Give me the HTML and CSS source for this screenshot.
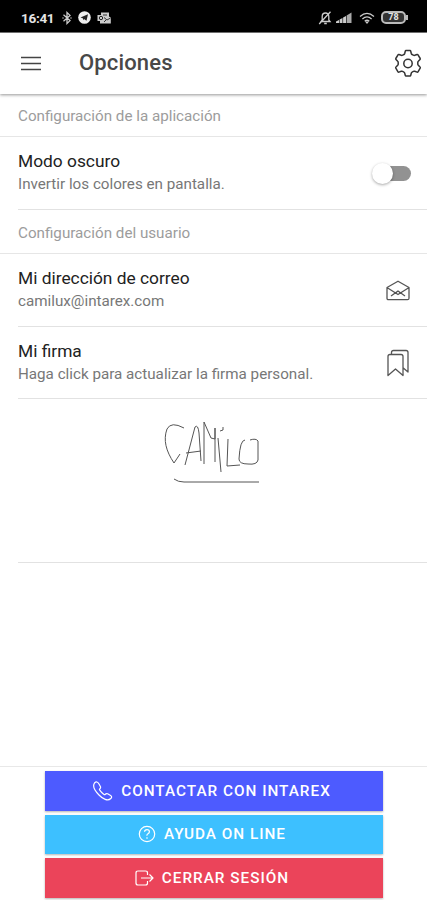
FILE: index.html
```html
<!DOCTYPE html>
<html lang="es">
<head>
<meta charset="utf-8">
<title>Opciones</title>
<link rel="stylesheet" href="styles.css">
</head>
<body>
<div class="status">
  <span class="clock">16:41</span>
  <svg class="bt" width="10" height="14" viewBox="0 0 10 14"><path d="M1.5 3.8 8 9.6 5 12.5v-11L8 4.4 1.5 10.2M.5 7h1M8.500 7h1"/></svg>
  <svg class="tg" width="13" height="13" viewBox="0 0 13 13"><circle cx="6.500" cy="6.500" r="6.300" fill="#eee"/><path d="M2.500 6.500 10 3.300 8.500 9.700 6 8 5.300 9.300 4.800 7.200z" fill="#222"/></svg>
  <svg class="ol" width="14" height="12" viewBox="0 0 14 12"><path d="M4 .5h8v4l1.800 1v6H3V9H.5V3H4z" fill="#ccc"/><circle cx="4" cy="6" r="1.700" fill="none" stroke="#222"/><path d="M7 5.500 10 8l3.500-2M7 10l2-2M6 3h4" fill="none" stroke="#333"/></svg>
  <span class="grow"></span>
  <svg class="bell" width="14" height="14" viewBox="0 0 14 14"><path d="M3 10.500h9L10.800 9V5.500C10.800 3.500 9.500 2 7.500 2S4.200 3.500 4.200 5.500V9zM6.200 12.500h2.600M12.500.8 1.200 13"/></svg>
  <svg class="sig" width="16" height="12" viewBox="0 0 16 12"><path d="M0 11V9.500L3 8v3zM3.600 11V7.500L6.500 6v5zM7.100 11V5.500L10 4v7z" fill="#ccc"/><path d="M10.600 11V3.500L15.500.5V11z" fill="#aaa"/></svg>
  <svg class="wifi" width="16" height="12" viewBox="0 0 16 12"><path d="M1 4.400Q8-1.500 15 4.400M3.400 6.900Q8 3 12.600 6.900M5.700 9.200Q8 7.300 10.300 9.200"/><path d="M6 9.500h4L8 12z" fill="#ccc" stroke="none"/></svg>
  <span class="battery">78</span>
</div>
<header class="bar">
  <svg class="menu" width="20" height="15" viewBox="0 0 20 15"><path d="M0 1.500h20M0 7.500h20M0 13.500h20"/></svg>
  <h1>Opciones</h1>
  <svg class="gear" width="30" height="30" viewBox="0 0 30 30"><path d="M13 1.500h4q.6 0 .7.600l.6 2.400q.2.700.8 1l1.300.7q.6.300 1.300.1l2.400-.8q.6-.2.900.3l2.200 3.700q.3.600-.2 1l-1.700 1.800q-.5.500-.5 1.100v1.800q0 .6.500 1.100l1.700 1.800q.5.400.2 1l-2.200 3.700q-.3.500-.9.300l-2.400-.8q-.7-.2-1.300.1l-1.300.7q-.6.300-.8 1l-.6 2.400q-.1.600-.7.600h-4q-.6 0-.7-.6l-.6-2.400q-.2-.7-.8-1l-1.300-.7q-.6-.3-1.300-.1l-2.400.8q-.6.200-.9-.3L2.800 19.100q-.3-.6.200-1l1.700-1.800q.5-.5.500-1.100v-1.800q0-.6-.5-1.100L3 10.500q-.5-.4-.2-1L5 5.800q.3-.5.900-.3l2.400.8q.7.200 1.300-.1l1.300-.7q.6-.3.800-1l.6-2.400q.1-.6.700-.6z"/><circle cx="15" cy="14.500" r="4.200"/></svg>
</header>
<main>
  <h2 class="first">Configuración de la aplicación</h2>
  <div class="item"><div><h3>Modo oscuro</h3><p>Invertir los colores en pantalla.</p></div><span class="toggle"></span></div>
  <h2>Configuración del usuario</h2>
  <div class="item"><div><h3>Mi dirección de correo</h3><p>camilux@intarex.com</p></div>
    <svg class="ico mail" width="24" height="22" viewBox="0 0 24 22"><path d="M1 7.500 12 1.200l11 6.300v10.700q0 1.500-1.500 1.500h-19Q1 19.700 1 18.200zM1.300 7.700 12 14.500 22.700 7.700M5 16l7-5 7 5"/></svg></div>
  <div class="item last"><div><h3>Mi firma</h3><p>Haga click para actualizar la firma personal.</p></div>
    <svg class="ico" width="24" height="28" viewBox="0 0 24 28"><path d="M2 26.500V7.500Q2 5.500 4 5.500h11q2 0 2 2v19L9.500 20zM5.500 5.300V3.500q0-2 2-2H20q2 0 2 2V23l-4.700-4"/></svg></div>
  <div class="signature"><svg width="100" height="64" viewBox="0 0 100 64"><path d="M20 6Q7-1 3 7C-1 18 2 29 10 41L16 32M21 43 31 5Q34 2 35 11L37 39M22 31 37 29M40 42 40 0 47 16 51 17 51 6 51 40M54 16 57 50M56 9l3-1v-3M64 17l-1 27 13-1M81 18q-5 0-6 19 0 5 9 5 9 1 10-4V19q-2-3-8-1M10 57Q14 60 20 60H95"/></svg></div>
</main>
<footer>
  <button class="blue"><svg width="20" height="20" viewBox="0 0 20 20"><path d="M1.500 2Q4-.5 6 3l1.500 2.700Q8 7 6.500 8.200c-.7.600 4.800 6.400 5.500 5.400q1.200-1.500 2.600-.8l3 1.700q2 1.400.2 3c-3 3-8 .5-11.800-3.500C1.500 9.500-.5 5 1.500 2z"/></svg>CONTACTAR CON INTAREX</button>
  <button class="sky"><svg width="18" height="18" viewBox="0 0 18 18"><circle cx="9" cy="9" r="7.700"/><path d="M6.500 6.800Q6.700 4.700 9 4.700t2.400 2Q11.400 8 10 8.800T9 10.800M9 12.300v1.400"/></svg>AYUDA ON LINE</button>
  <button class="red"><svg width="19" height="16" viewBox="0 0 19 16"><path d="M12.500 5V3q0-2-2-2H3Q1 1 1 3v10q0 2 2 2h7.500q2 0 2-2v-2M6 8h12M14.500 4.500 18 8l-3.500 3.500"/></svg>CERRAR SESIÓN</button>
</footer>
</body>
</html>
```
FILE: styles.css
```css
* { box-sizing: border-box; }
body { margin: 0; height: 900px; display: flex; flex-direction: column; overflow: hidden; background: #fff; font-family: Roboto, sans-serif; }
h1, h2, h3, p { margin: 0; font-weight: 400; white-space: nowrap; }
svg { flex: none; fill: none; }
.status { height: 33px; flex: none; background: #000; color: #e4e4e4; display: flex; align-items: center; padding: 3px 21px 0 21px; border-bottom: 1px solid #777; }
.clock { font-size: 13.5px; font-weight: 700; letter-spacing: -.3px; width: 41px; }
.bt, .bell, .wifi { stroke: #ccc; stroke-width: 1.3; }
.tg { margin-left: 6px; }
.ol { margin-left: 6px; }
.grow { flex: 1; }
.sig { margin-left: 4px; }
.wifi { margin: 0 6px 0 7px; }
.battery { position: relative; width: 25px; height: 13px; border: 2px solid #bbb; border-radius: 5px; font-size: 9px; font-weight: 700; line-height: 9px; text-align: center; background: #333; }
.battery::after { content: ""; position: absolute; right: -4px; top: 2px; width: 2px; height: 5px; background: #bbb; }
.bar { height: 61px; flex: none; display: flex; align-items: center; padding: 0 4px 0 21px; box-shadow: 0 1px 3px rgba(0,0,0,.42); }
.menu { stroke: #444; stroke-width: 1.7; }
.bar h1 { flex: 1; margin-left: 38px; font-size: 22px; font-weight: 500; color: #484848; letter-spacing: .15px; position: relative; top: -1px; }
.gear { stroke: #333; stroke-width: 1.5; stroke-linejoin: round; }
main { flex: 1; }
h2 { height: 44px; line-height: 46px; padding-left: 18px; font-size: 15.2px; color: #9c9c9c; border-bottom: 1px solid #e6e6e6; }
h2.first { height: 43px; line-height: 45px; }
.item { height: 73px; margin-left: 18px; padding-right: 16px; display: flex; align-items: center; justify-content: space-between; border-bottom: 1px solid #e2e2e2; }
.item.last { height: 72px; }
.item h3 { font-size: 17.35px; line-height: 23px; color: #222; }
.item p { font-size: 15.2px; line-height: 23px; color: #777; }
.ico { margin-right: 1px; stroke: #555; stroke-width: 1.3; stroke-linejoin: round; }
.mail { margin-top: 2px; }
.toggle { position: relative; width: 36px; height: 15px; border-radius: 8px; background: #929292; }
.toggle::before { content: ""; position: absolute; left: -3px; top: -3px; width: 21px; height: 21px; border-radius: 50%; background: #fff; box-shadow: 0 1px 3px rgba(0,0,0,.35); }
.signature { height: 164px; margin-left: 18px; padding: 23px 0 0 146px; border-bottom: 1px solid #e2e2e2; }
.signature svg { stroke: #555; stroke-width: 1; display: block; }
footer { height: 134px; border-top: 1px solid #e8e8e8; padding: 4px 44px 0 45px; display: flex; flex-direction: column; gap: 4px; }
button { height: 39.5px; flex: none; border: 0; padding: 0 4px 0 0; color: #fff; font: 500 15.3px Roboto, sans-serif; letter-spacing: 1px; display: flex; align-items: center; justify-content: center; gap: 8px; box-shadow: 0 1px 2px rgba(0,0,0,.3); }
button svg { stroke: #fff; stroke-width: 1.2; stroke-linejoin: round; }
.blue { background: #4d5bff; }
.sky { background: #3dc0ff; }
.red { background: #eb445a; }
```
